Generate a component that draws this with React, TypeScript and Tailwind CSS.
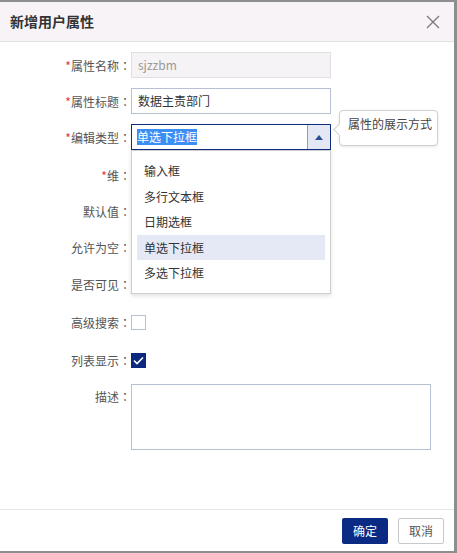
import React from 'react';

const font = { fontFamily: '"Noto Sans CJK SC", "Noto Sans", sans-serif' };
const colonFont = { fontFamily: '"Noto Sans CJK TC", "Noto Sans CJK SC", sans-serif' };

function Label({ text, required }: { text: string; required?: boolean }) {
  return (
    <div className="w-[131px] shrink-0 text-right text-[12px] text-[#555] leading-[25px]">
      {required && <span className="text-[#e5383b]">*</span>}
      {text}
      <span style={colonFont}>：</span>
    </div>
  );
}

function Checkbox({ checked }: { checked?: boolean }) {
  if (checked) {
    return (
      <div className="w-[15px] h-[15px] bg-[#0b2a7f] flex items-center justify-center">
        <svg width="11" height="9" viewBox="0 0 11 9" fill="none">
          <path d="M1 4.5L4 7.5L10 1.5" stroke="white" strokeWidth="1.6" />
        </svg>
      </div>
    );
  }
  return <div className="w-[15px] h-[15px] border border-[#b8c1d4] bg-white" />;
}

export default function App() {
  const options = ['输入框', '多行文本框', '日期选框', '单选下拉框', '多选下拉框'];

  return (
    <div
      className="w-[457px] h-[553px] bg-white border-t-2 border-r-[3px] border-b-2 border-[#8e8e8e] flex flex-col"
      style={font}
    >
      {/* header */}
      <div className="h-[40px] shrink-0 bg-[#f7f3f7] border-b border-[#e4e2e6] flex items-center justify-between pl-[10px] pr-[14px]">
        <span className="text-[14px] font-bold text-[#333]">新增用户属性</span>
        <svg width="14" height="14" viewBox="0 0 14 14">
          <path d="M1 1L13 13M13 1L1 13" stroke="#7a7a7a" strokeWidth="1.3" />
        </svg>
      </div>

      {/* body */}
      <div className="flex-1 pt-[10px]">
        <div className="flex items-center h-[26px]">
          <Label text="属性名称" required />
          <div className="w-[200px] h-[26px] border border-[#e2dfe3] bg-[#f6f3f6] text-[12px] text-[#999] pl-[6px] leading-[24px]">
            sjzzbm
          </div>
        </div>

        <div className="flex items-center h-[26px] mt-[10px]">
          <Label text="属性标题" required />
          <div className="w-[200px] h-[26px] border border-[#b8c1d4] bg-white text-[12px] text-[#333] pl-[6px] leading-[24px]">
            数据主责部门
          </div>
        </div>

        <div className="relative flex items-center h-[26px] mt-[10px]">
          <Label text="编辑类型" required />
          <div className="relative w-[200px] h-[26px] border border-[#0f2e80] bg-white flex">
            <div className="flex-1 pl-[5px] flex items-center">
              <span className="bg-[#3d8ef4] text-white text-[12px] leading-[16px]">单选下拉框</span>
            </div>
            <div className="w-[23px] border-l border-[#8a9cc4] bg-[#e3e8f4] flex items-center justify-center">
              <svg width="8" height="5" viewBox="0 0 8 5">
                <path d="M0 5L4 0L8 5Z" fill="#2d4f94" />
              </svg>
            </div>
            {/* dropdown */}
            <div className="absolute left-[-1px] top-[25px] w-[200px] h-[144px] border border-[#cfcfcf] bg-white shadow-[0_2px_4px_rgba(0,0,0,0.12)] z-10 pt-[7px] px-[5px]">
              {options.map((o) => (
                <div
                  key={o}
                  className={
                    'h-[25.5px] leading-[25.5px] pl-[7px] text-[12px] text-[#333] ' +
                    (o === '单选下拉框' ? 'bg-[#e5e9f5]' : '')
                  }
                >
                  {o}
                </div>
              ))}
            </div>
          </div>
          {/* tooltip */}
          <div className="absolute left-[339px] top-[-14px] w-[99px] h-[36px] border border-[#d0d0d0] rounded-[4px] bg-white shadow-[0_1px_3px_rgba(0,0,0,0.1)] pl-[8px] pt-[1px] text-[12px] text-[#444] leading-[24px]">
            <div className="absolute left-[-5px] top-[14px] w-[9px] h-[9px] bg-white border-l border-b border-[#d0d0d0] rotate-45" />
            <span className="relative">属性的展示方式</span>
          </div>
        </div>

        <div className="flex items-center h-[26px] mt-[12px]">
          <Label text="维" required />
          <div className="w-[200px] h-[26px] border border-[#b8c1d4]" />
        </div>

        <div className="flex items-center h-[26px] mt-[10px]">
          <Label text="默认值" />
          <div className="w-[200px] h-[26px] border border-[#b8c1d4]" />
        </div>

        <div className="flex items-center h-[26px] mt-[10px]">
          <Label text="允许为空" />
          <Checkbox />
        </div>

        <div className="flex items-center h-[26px] mt-[11px]">
          <Label text="是否可见" />
          <Checkbox />
        </div>

        <div className="flex items-center h-[26px] mt-[12px]">
          <Label text="高级搜索" />
          <Checkbox />
        </div>

        <div className="flex items-center h-[26px] mt-[12px]">
          <Label text="列表显示" />
          <Checkbox checked />
        </div>

        <div className="flex mt-[11px]">
          <Label text="描述" />
          <div className="w-[300px] h-[66px] border border-[#b8c1d4] bg-white" />
        </div>
      </div>

      {/* footer */}
      <div className="h-[42px] shrink-0 border-t border-[#e6e6e6] flex items-center justify-end gap-[10px] pr-[10px]">
        <button className="w-[46px] h-[26px] rounded-[2px] bg-[#0b2a84] text-white text-[12px]">确定</button>
        <button className="w-[46px] h-[26px] rounded-[2px] border border-[#c8c8c8] bg-white text-[#555] text-[12px]">
          取消
        </button>
      </div>
    </div>
  );
}
